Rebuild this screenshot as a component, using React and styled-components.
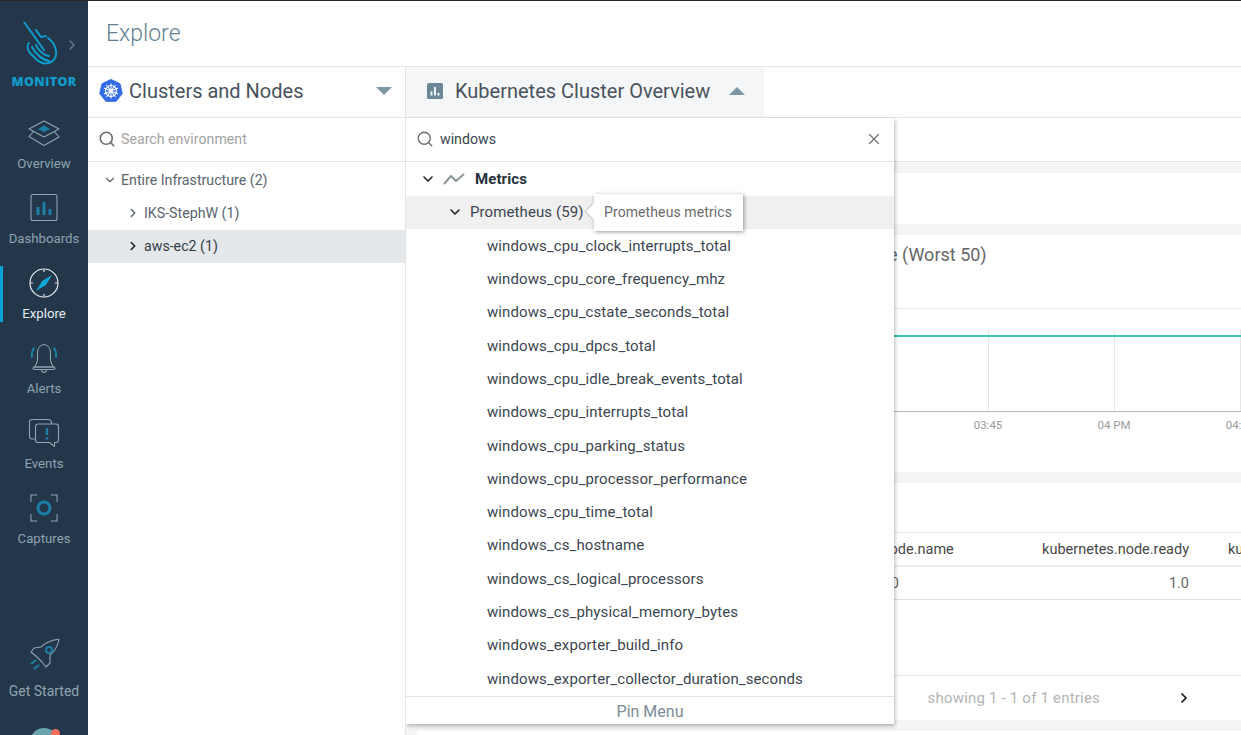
import styled, { createGlobalStyle } from "styled-components";
import { ChevronDown, ChevronRight, Search, X } from "lucide-react";

const METRICS = [
  "windows_cpu_clock_interrupts_total",
  "windows_cpu_core_frequency_mhz",
  "windows_cpu_cstate_seconds_total",
  "windows_cpu_dpcs_total",
  "windows_cpu_idle_break_events_total",
  "windows_cpu_interrupts_total",
  "windows_cpu_parking_status",
  "windows_cpu_processor_performance",
  "windows_cpu_time_total",
  "windows_cs_hostname",
  "windows_cs_logical_processors",
  "windows_cs_physical_memory_bytes",
  "windows_exporter_build_info",
  "windows_exporter_collector_duration_seconds",
];

const LINE = "#8fa3b1";
const ACCENT = "#1d7fa6";

function LogoIcon() {
  return (
    <svg width="44" height="48" viewBox="0 0 44 48" fill="none" stroke="#0f9bcb" strokeWidth="2" strokeLinecap="round" strokeLinejoin="round">
      <path d="M2 0 L22 28" />
      <path d="M14 8 L19 15 L24 14" />
      <path d="M26 16 C33 21 36 30 33 36 C29 43 20 43 14 37 L8 31 C5 27 5 23 7 21" />
      <path d="M10 25 C13 31 20 38 27 39" />
      <path d="M14 23 C16 28 21 33 27 34" />
    </svg>
  );
}

function OverviewIcon() {
  return (
    <svg width="32" height="32" viewBox="0 0 32 32" fill="none" stroke={LINE} strokeWidth="1.1" strokeLinejoin="round">
      <path d="M16 4 L31 12 L16 20 L1 12 Z" />
      <path d="M5.5 14.5 L1 19.5 L16 28.5 L31 20 L26.5 14.5" />
      <path d="M16 8.5 L22 12 L16 15 L10 12 Z" fill={ACCENT} stroke="none" />
    </svg>
  );
}

function DashboardsIcon() {
  return (
    <svg width="32" height="32" viewBox="0 0 32 32" fill="none">
      <rect x="3" y="2.5" width="26" height="26" rx="2" stroke={LINE} strokeWidth="1.1" />
      <path d="M10 23 V15 M16 23 V10 M22 23 V17" stroke={ACCENT} strokeWidth="3" />
    </svg>
  );
}

function ExploreIcon() {
  return (
    <svg width="32" height="32" viewBox="0 0 32 32" fill="none" stroke="#e6edf1" strokeWidth="1.2">
      <circle cx="16" cy="16" r="14" />
      <path d="M16 2.5 V5 M16 27 V29.5 M2.5 16 H5 M27 16 H29.5" />
      <path d="M24 8 L18 18 L8 24 L14 14 Z" fill="#0ea5d6" stroke="none" />
    </svg>
  );
}

function AlertsIcon() {
  return (
    <svg width="32" height="32" viewBox="0 0 32 32" fill="none" stroke={LINE} strokeWidth="1.1" strokeLinejoin="round">
      <path d="M16 2.5 C12 3 9.5 6.5 9.5 11 V18 C9.5 21 8 23 6.500 25 H25.500 C24 23 22.500 21 22.500 18 V11 C22.500 6.500 20 3 16 2.500 Z" />
      <rect x="5" y="25" width="22" height="2.5" rx="1.25" />
      <path d="M13.5 27.5 C13.5 31.500 18.500 31.500 18.500 27.500" />
      <path d="M6 6 C4 9 3.500 12 4 15 M26 6 C28 9 28.500 12 28 15" stroke={ACCENT} strokeWidth="2" strokeLinecap="round" />
    </svg>
  );
}

function EventsIcon() {
  return (
    <svg width="32" height="32" viewBox="0 0 32 32" fill="none" stroke={LINE} strokeWidth="1.1" strokeLinejoin="round">
      <path d="M7.5 22 H4 Q1.5 22 1.5 19.5 V5 Q1.5 2.5 4 2.5 H20 Q23.5 2.5 23.5 6 V7" />
      <path d="M10 7 H28 Q30.5 7 30.5 9.5 V23 Q30.5 25.5 28 25.5 H26.5 V29.5 L21.5 25.5 H10 Q7.5 25.5 7.5 23 V9.5 Q7.5 7 10 7 Z" />
      <path d="M19 11 V18 M19 20.2 V22.5" stroke={ACCENT} strokeWidth="2.4" />
    </svg>
  );
}

function CapturesIcon() {
  return (
    <svg width="32" height="32" viewBox="0 0 32 32" fill="none" stroke={LINE} strokeWidth="1.1">
      <path d="M9 3 H3 V10 M23 3 H29 V10 M3 22 V29 H9 M29 22 V29 H23" />
      <circle cx="16" cy="16" r="6" stroke={ACCENT} strokeWidth="3" />
    </svg>
  );
}

function RocketIcon() {
  return (
    <svg width="32" height="32" viewBox="0 0 32 32" fill="none" stroke={LINE} strokeWidth="1.1" strokeLinejoin="round">
      <path d="M31 0 C25 1 18 3 13 8 L6 9 L3 13 L8 17 L14 23 L18 28 L22 24 L22 16 C27 12 30 6 31 0 Z" />
      <circle cx="21" cy="11" r="3" stroke={ACCENT} strokeWidth="2" />
      <path d="M3 25 L8 21 M6 30 L11 26" stroke={ACCENT} strokeWidth="2.2" />
    </svg>
  );
}

function KubeIcon() {
  return (
    <svg width="24" height="24" viewBox="0 0 24 24">
      <path d="M12 0.5 L21 4.8 L23.3 14.5 L17.1 22.3 L6.9 22.3 L0.7 14.5 L3 4.8 Z" fill="#326ce5" stroke="#326ce5" strokeWidth="1" strokeLinejoin="round" />
      <g fill="none" stroke="#fff" strokeWidth="1.1">
        <circle cx="12" cy="12" r="5.5" />
        <path d="M12 4.5 V19.5 M5 9 L19 15 M19 9 L5 15 M7.5 6 L16.5 18 M16.5 6 L7.5 18" />
      </g>
    </svg>
  );
}

function BarsIcon() {
  return (
    <svg width="16" height="16" viewBox="0 0 16 16">
      <rect width="16" height="16" rx="1.5" fill="#6c8798" />
      <path d="M4.5 12.5 V8.5 M8 12.5 V4 M11.5 12.5 V10" stroke="#fff" strokeWidth="1.8" />
    </svg>
  );
}

function TrendIcon() {
  return (
    <svg width="25" height="12" viewBox="0 0 25 12" fill="none" stroke="#8b9499" strokeWidth="2" strokeLinejoin="round">
      <path d="M1 11 L8 3 L13 8 L21 1" />
    </svg>
  );
}

function NodeChart() {
  return (
    <ChartSvg height="163">
      <g stroke="#e6e6e6">
        <line x1="571.5" x2="571.5" y1="20" y2="102" />
        <line x1="697.5" x2="697.5" y1="20" y2="102" />
        <line x1="823.5" x2="823.5" y1="20" y2="102" />
      </g>
      <line x1="0" x2="824" y1="27" y2="27" stroke="#3fc3bc" strokeWidth="2" />
      <line x1="0" x2="824" y1="102.5" y2="102.5" stroke="#b5b5b5" />
      <g fill="#9a9a9a" fontSize="11.5" textAnchor="middle">
        <text x="571" y="120">03:45</text>
        <text x="697" y="120">04 PM</text>
        <text x="823" y="120">04:15</text>
      </g>
    </ChartSvg>
  );
}

export default function App() {
  return (
    <>
      <GlobalStyle />
      <Page>
        <Sidebar>
          <LogoBlock>
            <LogoIcon />
            <LogoArrow>
              <ChevronRight size={16} strokeWidth={2} />
            </LogoArrow>
            <LogoText>MONITOR</LogoText>
          </LogoBlock>
          <NavItem>
            <OverviewIcon />
            <NavLabel>Overview</NavLabel>
          </NavItem>
          <NavItem>
            <DashboardsIcon />
            <NavLabel>Dashboards</NavLabel>
          </NavItem>
          <NavItem $active>
            <ExploreIcon />
            <NavLabel $active>Explore</NavLabel>
          </NavItem>
          <NavItem>
            <AlertsIcon />
            <NavLabel>Alerts</NavLabel>
          </NavItem>
          <NavItem>
            <EventsIcon />
            <NavLabel>Events</NavLabel>
          </NavItem>
          <NavItem>
            <CapturesIcon />
            <NavLabel>Captures</NavLabel>
          </NavItem>
          <StartedItem>
            <RocketIcon />
            <NavLabel>Get Started</NavLabel>
          </StartedItem>
          <Avatar />
        </Sidebar>

        <Main>
          <TopBar>Explore</TopBar>
          <Body>
            <LeftPanel>
              <ScopeHeader>
                <KubeIcon />
                <ScopeTitle>Clusters and Nodes</ScopeTitle>
                <Caret />
              </ScopeHeader>
              <SearchRow>
                <Search size={18} color="#6e6e6e" strokeWidth={2.2} />
                <Placeholder>Search environment</Placeholder>
              </SearchRow>
              <TreeList>
                <TreeRow $indent={15}>
                  <ChevronDown size={14} strokeWidth={2} />
                  Entire Infrastructure (2)
                </TreeRow>
                <TreeRow $indent={38}>
                  <ChevronRight size={14} strokeWidth={2.4} />
                  IKS-StephW (1)
                </TreeRow>
                <TreeRow $indent={38} $selected>
                  <ChevronRight size={14} strokeWidth={2.8} color="#222" />
                  aws-ec2 (1)
                </TreeRow>
              </TreeList>
            </LeftPanel>

            <RightPanel>
              <TabBar>
                <ActiveTab>
                  <BarsIcon />
                  <TabTitle>Kubernetes Cluster Overview</TabTitle>
                  <Caret $up />
                </ActiveTab>
              </TabBar>
              <Toolbar />
              <Dashboard>
                <EmptyPanel />
                <ChartPanel>
                  <PanelTitle>Top Nodes by Memory Usage Percentage (Worst 50)</PanelTitle>
                  <NodeChart />
                </ChartPanel>
                <TablePanel>
                  <TableRow $head>
                    <span>kubernetes.cluster.name</span>
                    <span>kubernetes.node.name</span>
                    <NumCell>kubernetes.node.ready</NumCell>
                    <LastCell>kubernetes.node.unschedulable</LastCell>
                  </TableRow>
                  <TableRow>
                    <span>aws-ec2</span>
                    <span>ip-172-31-10-0</span>
                    <NumCell>1.0</NumCell>
                    <LastCell />
                  </TableRow>
                  <TableFooter>
                    <FooterText>showing 1 - 1 of 1 entries</FooterText>
                    <ChevronRight size={16} strokeWidth={2.6} color="#111" />
                  </TableFooter>
                </TablePanel>
                <NextPanel />
              </Dashboard>

              <MetricMenu>
                <MenuSearch>
                  <Search size={18} color="#6e6e6e" strokeWidth={1.8} />
                  <MenuQuery>windows</MenuQuery>
                  <X size={18} color="#777" strokeWidth={1.8} />
                </MenuSearch>
                <MenuList>
                  <MenuRow $indent={14} $bold>
                    <ChevronDown size={16} strokeWidth={2.4} color="#222" />
                    <TrendIcon />
                    Metrics
                  </MenuRow>
                  <MenuRow $indent={41} $hover>
                    <ChevronDown size={16} strokeWidth={2.4} color="#222" />
                    Prometheus (59)
                    <Tooltip>Prometheus metrics</Tooltip>
                  </MenuRow>
                  {METRICS.map((name) => (
                    <MenuRow key={name} $indent={81}>
                      {name}
                    </MenuRow>
                  ))}
                </MenuList>
                <PinMenu>Pin Menu</PinMenu>
              </MetricMenu>
            </RightPanel>
          </Body>
        </Main>
      </Page>
    </>
  );
}

const GlobalStyle = createGlobalStyle`
  html, body {
    margin: 0;
    height: 100%;
    overflow: hidden;
    background: #fff;
  }
  body {
    font-family: Roboto, "Liberation Sans", sans-serif;
    color: #3c4650;
  }
  * {
    box-sizing: border-box;
  }
`;

const Page = styled.div`
  display: flex;
  height: 735px;
  overflow: hidden;
  border-top: 1px solid #26282b;
`;

const Sidebar = styled.nav`
  width: 88px;
  flex: none;
  display: flex;
  flex-direction: column;
  align-items: center;
  overflow: hidden;
  background: #24374a;
`;

const LogoBlock = styled.div`
  position: relative;
  width: 100%;
  height: 116px;
  flex: none;
  padding-top: 21px;
  display: flex;
  flex-direction: column;
  align-items: center;
`;

const LogoArrow = styled.span`
  position: absolute;
  left: 64px;
  top: 36px;
  color: #5f7f92;
`;

const LogoText = styled.div`
  margin-top: 3px;
  font-family: "Open Sans", sans-serif;
  font-size: 12.5px;
  font-weight: 800;
  letter-spacing: 0.35px;
  color: #0f9bcb;
`;

const NavLabel = styled.span`
  font-size: 13.2px;
  line-height: 16px;
  white-space: nowrap;
  color: ${({ $active }) => ($active ? "#e6edf1" : "#8fa3b1")};
`;

const NavItem = styled.a`
  position: relative;
  width: 100%;
  height: 75px;
  flex: none;
  display: flex;
  flex-direction: column;
  align-items: center;
  gap: 7px;

  ${({ $active }) =>
    $active &&
    `
    &::before {
      content: "";
      position: absolute;
      left: 0;
      top: -1px;
      width: 3px;
      height: 56px;
      background: #08a3d6;
    }
  `}
`;

const StartedItem = styled(NavItem)`
  margin-top: 72px;
  height: 60px;
  gap: 12px;

  ${NavLabel} {
    font-size: 14px;
  }
`;

const Avatar = styled.div`
  position: relative;
  flex: none;
  width: 28px;
  height: 28px;
  margin-top: 29px;
  border-radius: 50%;
  background: #6aa5ab;

  &::after {
    content: "";
    position: absolute;
    right: -2px;
    top: 1px;
    width: 9px;
    height: 9px;
    border-radius: 50%;
    background: #f0705f;
  }
`;

const Main = styled.main`
  flex: 1;
  min-width: 0;
  display: flex;
  flex-direction: column;
`;

const TopBar = styled.header`
  height: 66px;
  flex: none;
  padding: 0 18px;
  display: flex;
  align-items: center;
  font-size: 23px;
  font-weight: 300;
  color: #5f7f92;
  border-bottom: 1px solid #e4e4e4;
`;

const Body = styled.div`
  flex: 1;
  min-height: 0;
  display: flex;
`;

const LeftPanel = styled.aside`
  width: 318px;
  flex: none;
  border-right: 1px solid #e4e4e4;
  background: #fff;
`;

const ScopeHeader = styled.div`
  height: 51px;
  padding: 0 13px 3px 11px;
  display: flex;
  align-items: center;
  border-bottom: 1px solid #e4e4e4;
`;

const ScopeTitle = styled.span`
  flex: 1;
  margin-left: 6px;
  font-size: 20px;
  color: #48525c;
`;

const Caret = styled.span`
  width: 0;
  height: 0;
  border-left: 8px solid transparent;
  border-right: 8px solid transparent;
  ${({ $up }) =>
    $up ? "border-bottom: 8px solid #7d95a4;" : "border-top: 8px solid #7d95a4;"}
`;

const SearchRow = styled.div`
  height: 44px;
  padding: 0 10px 2px;
  display: flex;
  align-items: center;
  gap: 5px;
  border-bottom: 1px solid #e4e4e4;
`;

const Placeholder = styled.span`
  font-size: 14.2px;
  color: #a3a3a3;
`;

const TreeList = styled.div`
  padding-top: 1px;
`;

const TreeRow = styled.div`
  height: 33.25px;
  padding-left: ${({ $indent }) => $indent}px;
  display: flex;
  align-items: center;
  gap: 4px;
  font-size: 14.2px;
  color: ${({ $selected }) => ($selected ? "#333d46" : "#5a646d")};
  background: ${({ $selected }) => ($selected ? "#e4e8ea" : "transparent")};
`;

const RightPanel = styled.section`
  position: relative;
  flex: 1;
  min-width: 0;
  display: flex;
  flex-direction: column;
  overflow: hidden;
`;

const TabBar = styled.div`
  height: 51px;
  flex: none;
  display: flex;
  border-bottom: 1px solid #e4e4e4;
`;

const ActiveTab = styled.div`
  width: 358px;
  padding: 0 19px 2px 21px;
  display: flex;
  align-items: center;
  background: #f5f6f7;
`;

const TabTitle = styled.span`
  flex: 1;
  margin-left: 12px;
  font-size: 20px;
  color: #48525c;
`;

const Toolbar = styled.div`
  height: 44px;
  flex: none;
  border-bottom: 1px solid #e4e4e4;
`;

const Dashboard = styled.div`
  flex: 1;
  min-height: 0;
  padding: 11px 0 0 11px;
  display: flex;
  flex-direction: column;
  gap: 11px;
  overflow: hidden;
  background: #f5f5f5;
`;

const Panel = styled.div`
  flex: none;
  background: #fff;
`;

const EmptyPanel = styled(Panel)`
  height: 51px;
`;

const ChartPanel = styled(Panel)`
  height: 237px;
`;

const PanelTitle = styled.div`
  height: 74px;
  padding: 9px 0 0 150px;
  font-size: 18px;
  line-height: 22px;
  white-space: nowrap;
  color: #666;
  border-bottom: 1px solid #ececec;
`;

const ChartSvg = styled.svg`
  display: block;
  width: 100%;
  font-family: Roboto, sans-serif;
`;

const TablePanel = styled(Panel)`
  height: 237px;
  padding-top: 49px;
  display: flex;
  flex-direction: column;
`;

const TableRow = styled.div`
  height: ${({ $head }) => ($head ? "35px" : "33px")};
  flex: none;
  padding-left: 16px;
  display: grid;
  grid-template-columns: 373px 208px 175px 1fr;
  align-items: center;
  font-size: 14.5px;
  white-space: nowrap;
  overflow: hidden;
  color: ${({ $head }) => ($head ? "#484848" : "#666")};
  border-top: ${({ $head }) => ($head ? "1px solid #e8e8e8" : "none")};
  border-bottom: ${({ $head }) => ($head ? "2px solid #ececec" : "1px solid #e0e0e0")};
`;

const NumCell = styled.span`
  text-align: right;
`;

const LastCell = styled.span`
  padding-left: 39px;
`;

const TableFooter = styled.div`
  margin-top: auto;
  height: 45px;
  padding-right: 49px;
  display: flex;
  align-items: center;
  justify-content: flex-end;
  gap: 76px;
  border-top: 1px solid #e4e4e4;
`;

const FooterText = styled.span`
  font-size: 15px;
  letter-spacing: 0.2px;
  color: #b4b4b4;
`;

const NextPanel = styled(Panel)`
  height: 60px;
`;

const MetricMenu = styled.div`
  position: absolute;
  left: 0;
  top: 51px;
  width: 488px;
  height: 606px;
  display: flex;
  flex-direction: column;
  background: #fff;
  box-shadow: 1px 2px 4px rgba(0, 0, 0, 0.28);
`;

const MenuSearch = styled.div`
  height: 44px;
  flex: none;
  padding: 0 11px 2px 10px;
  display: flex;
  align-items: center;
  gap: 6px;
  border-bottom: 1px solid #e4e4e4;
`;

const MenuQuery = styled.span`
  flex: 1;
  font-size: 14.2px;
  color: #3c4650;
`;

const MenuList = styled.div`
  flex: 1;
  min-height: 0;
  padding-top: 0.5px;
  overflow: hidden;
`;

const MenuRow = styled.div`
  position: relative;
  height: 33.3px;
  padding-left: ${({ $indent }) => $indent}px;
  display: flex;
  align-items: center;
  gap: 7px;
  font-size: 15px;
  letter-spacing: 0.1px;
  white-space: nowrap;
  font-weight: ${({ $bold }) => ($bold ? 700 : 400)};
  color: ${({ $bold }) => ($bold ? "#27323b" : "#3c4650")};
  background: ${({ $hover }) => ($hover ? "#f0f0f0" : "transparent")};
`;

const Tooltip = styled.div`
  position: absolute;
  left: 188px;
  top: -2px;
  width: 149px;
  height: 37px;
  padding-left: 10px;
  display: flex;
  align-items: center;
  font-size: 14px;
  font-weight: 400;
  color: #6a6a6a;
  background: #fff;
  box-shadow: 1px 1px 4px rgba(0, 0, 0, 0.4);

  &::before {
    content: "";
    position: absolute;
    left: -6px;
    top: 12px;
    width: 11px;
    height: 11px;
    transform: rotate(45deg);
    background: #fff;
    box-shadow: -1px 1px 1px rgba(0, 0, 0, 0.18);
  }
`;

const PinMenu = styled.div`
  height: 28px;
  padding-top: 1px;
  flex: none;
  display: flex;
  align-items: center;
  justify-content: center;
  font-size: 16px;
  color: #7c8b96;
  border-top: 1px solid #e4e4e4;
`;
